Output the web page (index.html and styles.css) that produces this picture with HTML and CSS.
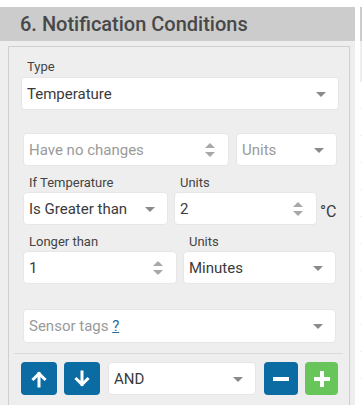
FILE: index.html
```html
<!DOCTYPE html>
<html lang="en">
<head>
  <meta charset="UTF-8" />
  <meta name="viewport" content="width=device-width, initial-scale=1" />
  <title>Notification Conditions</title>
  <link rel="stylesheet" href="styles.css">
</head>
<body>
  <div class="wrap">
    <div class="panel">
      <div class="panel-head">6. Notification Conditions</div>
      <div class="panel-body">
        <div class="box">
          <!-- Type -->
          <label class="lbl">Type</label>
          <div class="ctl select full">Temperature<span class="caret"></span></div>

          <div class="row first">
            <div class="ctl num w-changes placeholder">Have no changes<span class="spin"></span></div>
            <div class="ctl select w-units placeholder">Units<span class="caret"></span></div>
          </div>

          <div class="row labels">
            <label class="lbl w-cond">If Temperature</label>
            <label class="lbl">Units</label>
          </div>
          <div class="row">
            <div class="ctl select w-cond">Is Greater than<span class="caret"></span></div>
            <div class="ctl num w-value">2<span class="spin"></span></div>
            <span class="deg">&deg;C</span>
          </div>

          <div class="row labels">
            <label class="lbl w-longer">Longer than</label>
            <label class="lbl">Units</label>
          </div>
          <div class="row">
            <div class="ctl num w-longer">1<span class="spin"></span></div>
            <div class="ctl select w-minutes">Minutes<span class="caret"></span></div>
          </div>

          <div class="row tags">
            <div class="ctl select w-tags placeholder">Sensor tags&nbsp;<a class="help">?</a><span class="caret"></span></div>
          </div>

          <div class="sep"></div>

          <!-- Actions -->
          <div class="actions">
            <button class="btn blue up">
              <svg width="16" height="18" viewBox="0 0 16 18"><path d="M8 16V3.5M2.5 9L8 3.5 13.5 9" fill="none" stroke="#fff" stroke-width="3" stroke-linecap="square"/></svg>
            </button>
            <button class="btn blue down">
              <svg width="16" height="18" viewBox="0 0 16 18"><path d="M8 2v12.5M2.5 9L8 14.5 13.5 9" fill="none" stroke="#fff" stroke-width="3" stroke-linecap="square"/></svg>
            </button>
            <div class="ctl select w-and">AND<span class="caret"></span></div>
            <button class="btn blue minus">
              <svg width="18" height="18" viewBox="0 0 18 18"><path d="M1 9h16" stroke="#fff" stroke-width="4"/></svg>
            </button>
            <button class="btn green plus">
              <svg width="18" height="18" viewBox="0 0 18 18"><path d="M1 9h16M9 1v16" stroke="#fff" stroke-width="4"/></svg>
            </button>
          </div>
        </div>
      </div>
    </div>
    <div class="side">
      <div class="side-head"></div>
      <div class="side-body"></div>
      <div class="side-rest"></div>
    </div>
  </div>
</body>
</html>
```

FILE: styles.css
```css
* { box-sizing: border-box; }
body {
  margin: 0;
  font-family: Roboto, 'Liberation Sans', sans-serif;
  background: #fff;
  color: #333;
}
.wrap {
  display: flex;
  padding-top: 7px;
  height: 405px;
  overflow: hidden;
}
.panel {
  width: 355px;
  display: flex;
  flex-direction: column;
}
.panel-head {
  height: 34px;
  line-height: 34px;
  background: #cccccc;
  color: #484848;
  font-size: 20px;
  font-weight: 500;
  padding-left: 20px;
}
.panel-body {
  flex: 1;
  background: #eeeeee;
  padding: 5px 5px 0 8px;
}
.box {
  border: 1px solid #cfcfcf;
  border-bottom: none;
  height: 100%;
  padding: 12px 10px 0 12px;
}
.lbl {
  display: block;
  font-size: 13px;
  line-height: 16px;
  padding-left: 6px;
  margin-bottom: 2px;
  color: #444;
}
.ctl {
  position: relative;
  height: 33px;
  line-height: 33px;
  background: #fff;
  border: 1px solid #e6e6e6;
  border-radius: 4px;
  font-size: 15px;
  color: #3a3a3a;
  padding-left: 5px;
  white-space: nowrap;
}
.placeholder { color: #9a9a9a; }
.full { width: 318px; }
.row {
  display: flex;
  gap: 6px;
  padding-left: 2px;
}
.row.first { margin-top: 23px; gap: 7px; }
.row.labels { margin-top: 9px; }
.row.labels .lbl { margin-bottom: 1px; }
.row.tags { margin-top: 25px; }
.w-changes { width: 206px; }
.w-units { width: 101px; }
.w-cond { width: 145px; }
.w-value { width: 143px; }
.w-longer { width: 154px; }
.w-minutes { width: 153px; }
.w-tags { width: 313px; height: 34px; }
.w-and { width: 148px; }
.caret {
  position: absolute;
  right: 12px;
  top: 14px;
  width: 0;
  height: 0;
  border-left: 5.5px solid transparent;
  border-right: 5.5px solid transparent;
  border-top: 5px solid #8a8a8a;
}
.spin {
  position: absolute;
  right: 12px;
  top: 9px;
  width: 11px;
  height: 14px;
}
.spin::before, .spin::after {
  content: '';
  position: absolute;
  left: 0;
  border-left: 5.5px solid transparent;
  border-right: 5.5px solid transparent;
}
.spin::before { top: 0; border-bottom: 5px solid #a8a8a8; }
.spin::after { bottom: 0; border-top: 5px solid #a8a8a8; }
.deg {
  align-self: flex-end;
  font-size: 16px;
  line-height: 20px;
  margin-left: -3px;
  padding-bottom: 3px;
  color: #3a3a3a;
}
.help {
  color: #2a6aa4;
  text-decoration: underline;
}
.sep {
  height: 1px;
  background: #dadada;
  margin: 10px -4px 0 -7px;
}
.actions {
  display: flex;
  align-items: center;
  margin-top: 8px;
}
.btn {
  height: 33px;
  border: none;
  border-radius: 4px;
  padding: 0;
  display: flex;
  align-items: center;
  justify-content: center;
}
.btn.blue { background: #0b6ba3; }
.btn.green { background: #68c55a; }
.up { width: 36px; }
.down { width: 36px; margin-left: 7px; }
.actions .w-and { margin-left: 8px; }
.minus { width: 34px; margin-left: 8px; }
.plus { width: 33px; margin-left: 7px; }
.side {
  width: 4px;
  margin-left: 5px;
  display: flex;
  flex-direction: column;
}
.side-head { height: 34px; background: #cccccc; }
.side-body { height: 41px; background: #eeeeee; }
.side-rest {
  flex: 1;
  background: repeating-linear-gradient(to bottom, #fff 0, #fff 26px, #f0f0f0 26px, #f0f0f0 27px);
}
```
